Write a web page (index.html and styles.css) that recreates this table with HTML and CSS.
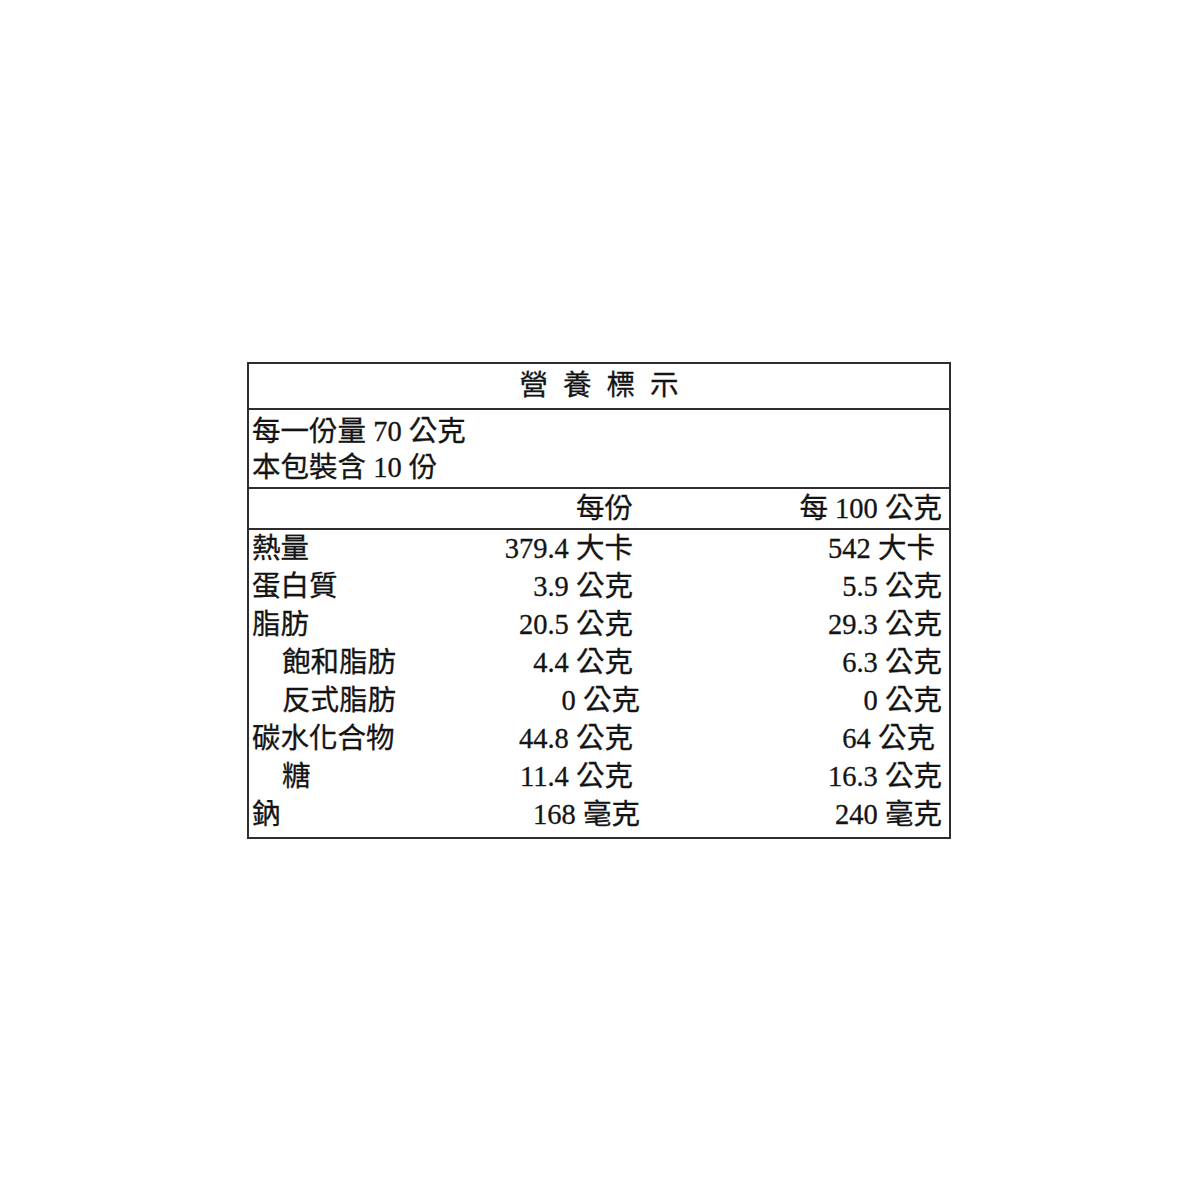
FILE: index.html
```html
<!DOCTYPE html>
<html lang="zh-Hant">
<head>
<meta charset="utf-8">
<title>營養標示</title>
<link rel="stylesheet" href="styles.css">
</head>
<body>
<div class="label">
  <div class="title">營養標示</div>
  <div class="serving">
    <div>每一份量 70 公克</div>
    <div>本包裝含 10 份</div>
  </div>
  <div class="grid head">
    <div></div>
    <div class="num">每份</div>
    <div class="num">每 100 公克</div>
  </div>
  <div class="grid body">
    <div>熱量</div><div class="num">379.4 大卡</div><div class="num r2">542 大卡</div>
    <div>蛋白質</div><div class="num">3.9 公克</div><div class="num">5.5 公克</div>
    <div>脂肪</div><div class="num">20.5 公克</div><div class="num">29.3 公克</div>
    <div class="sub">飽和脂肪</div><div class="num">4.4 公克</div><div class="num">6.3 公克</div>
    <div class="sub">反式脂肪</div><div class="num shift">0 公克</div><div class="num">0 公克</div>
    <div>碳水化合物</div><div class="num">44.8 公克</div><div class="num r2">64 公克</div>
    <div class="sub">糖</div><div class="num">11.4 公克</div><div class="num">16.3 公克</div>
    <div>鈉</div><div class="num shift">168 毫克</div><div class="num">240 毫克</div>
  </div>
</div>
</body>
</html>
```

FILE: styles.css
```css
html, body {
  margin: 0;
  padding: 0;
  background: #ffffff;
}

body {
  padding: 362px 0 0 247px;
  font-family: "Liberation Serif", "Noto Sans CJK TC", serif;
  font-size: 28.5px;
  color: #141414;
  -webkit-text-stroke: 0.3px #141414;
}

.label {
  box-sizing: border-box;
  width: 704px;
  border: 2px solid #2e2e2e;
}

.title {
  height: 44px;
  line-height: 44px;
  text-align: center;
  letter-spacing: 15px;
  text-indent: 15px;
  border-bottom: 2px solid #2e2e2e;
}

.serving {
  box-sizing: border-box;
  height: 79px;
  padding: 4px 0 0 3px;
  line-height: 36px;
  border-bottom: 2px solid #2e2e2e;
}

.grid {
  display: grid;
  grid-template-columns: 200px 181px 1fr;
  padding: 0 7px 0 3px;
}

.head {
  height: 39px;
  line-height: 40px;
  border-bottom: 2px solid #2e2e2e;
}

.body {
  grid-auto-rows: 38px;
  line-height: 38px;
  padding-bottom: 3px;
}

.num {
  text-align: right;
  white-space: nowrap;
}

.sub {
  padding-left: 30px;
}

.shift {
  margin-right: -7px;
}

.r2 {
  padding-right: 7px;
}
```
